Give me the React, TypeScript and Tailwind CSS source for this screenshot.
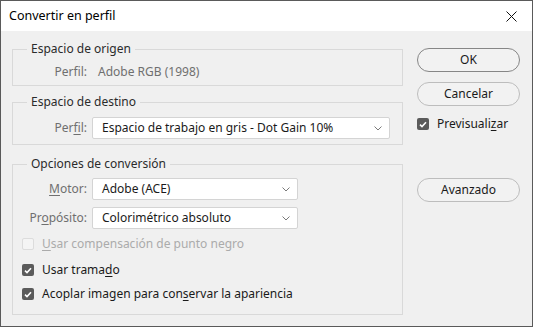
import React from 'react';

const font = {fontFamily: '"Segoe UI", "Noto Sans", "Open Sans", sans-serif'};

function U(props: {children: React.ReactNode}) {
  return <span className="underline underline-offset-2">{props.children}</span>;
}

function Chevron() {
  return (
    <svg width="8" height="5" viewBox="0 0 8 5" className="text-[#7a7a7a]">
      <path d="M0.5 0.5 L4 4 L7.5 0.5" fill="none" stroke="currentColor" strokeWidth="1" />
    </svg>
  );
}

function Select(props: {value: string; width: string}) {
  return (
    <div
      className={`flex h-[22px] items-center justify-between rounded-[2px] border border-[#d4d4d4] bg-white pl-[9px] pr-[7px] text-[#1a1a1a] ${props.width}`}
    >
      <span>{props.value}</span>
      <Chevron />
    </div>
  );
}

function Check(props: {checked?: boolean; disabled?: boolean}) {
  if (props.disabled) {
    return <div className="h-[12px] w-[12px] rounded-[2px] border border-[#dcdcdc] bg-[#f4f4f4]" />;
  }
  return (
    <div className="flex h-[12px] w-[12px] items-center justify-center rounded-[2px] bg-[#5b5b5b]">
      {props.checked && (
        <svg width="8" height="7" viewBox="0 0 8 7">
          <path d="M1 3.6 L3 5.5 L7 1.2" fill="none" stroke="white" strokeWidth="1.6" />
        </svg>
      )}
    </div>
  );
}

function Group(props: {title: string; className?: string; children: React.ReactNode}) {
  return (
    <fieldset className={`border border-[#d9d9d9] ${props.className ?? ''}`}>
      <legend className="ml-[14px] px-[4px] leading-[16px] text-[#2b2b2b]">{props.title}</legend>
      {props.children}
    </fieldset>
  );
}

function Label(props: {children: React.ReactNode}) {
  return <div className="w-[79px] pr-[5px] text-right text-[#6f6f6f]">{props.children}</div>;
}

function Button(props: {label: string; primary?: boolean; className?: string}) {
  return (
    <div
      className={`flex h-[24px] w-[103px] items-center justify-center rounded-full bg-[#f2f2f2] text-[#1a1a1a] ${
        props.primary ? 'border-[1.5px] border-[#868686]' : 'border border-[#bdbdbd]'
      } ${props.className ?? ''}`}
    >
      {props.label}
    </div>
  );
}

export default function App() {
  return (
    <div
      className="flex h-[327px] w-[533px] flex-col border border-[#5a5a5a] bg-[#f0f0f0] text-[12px] leading-[16px]"
      style={font}
    >
      <div className="flex h-[30px] shrink-0 items-center justify-between bg-white pl-[8px] pr-[15px] text-black">
        <span className="text-[12.5px]">Convertir en perfil</span>
        <svg width="11" height="11" viewBox="0 0 11 11">
          <path d="M0.5 0.5 L10.5 10.5 M10.5 0.5 L0.5 10.5" stroke="#111" strokeWidth="1" />
        </svg>
      </div>

      <div className="flex pl-[11px] pt-[10px]">
        <div className="flex w-[391px] flex-col">
          <Group title="Espacio de origen" className="pb-[5px]">
            <div className="flex pt-[7px] text-[#6f6f6f]">
              <Label>Perfil:</Label>
              <span className="pl-[6px]">Adobe RGB (1998)</span>
            </div>
          </Group>

          <Group title="Espacio de destino" className="mt-[8px] pb-[5px]">
            <div className="flex items-center pt-[7px]">
              <Label>
                Per<U>f</U>il:
              </Label>
              <Select value="Espacio de trabajo en gris - Dot Gain 10%" width="w-[298px]" />
            </div>
          </Group>

          <Group title="Opciones de conversión" className="mt-[11px] pb-[12px]">
            <div className="flex items-center pt-[6px]">
              <Label>
                <U>M</U>otor:
              </Label>
              <Select value="Adobe (ACE)" width="w-[206px]" />
            </div>
            <div className="mt-[7px] flex items-center">
              <Label>
                Pr<U>o</U>pósito:
              </Label>
              <Select value="Colorimétrico absoluto" width="w-[206px]" />
            </div>
            <div className="mt-[7px] flex items-center gap-[8px] pl-[9px] text-[#ababab]">
              <Check disabled />
              <span>
                <U>U</U>sar compensación de punto negro
              </span>
            </div>
            <div className="mt-[10px] flex items-center gap-[8px] pl-[9px] text-[#1a1a1a]">
              <Check checked />
              <span>
                Usar trama<U>d</U>o
              </span>
            </div>
            <div className="mt-[8px] flex items-center gap-[8px] pl-[9px] text-[#1a1a1a]">
              <Check checked />
              <span>
                Acoplar imagen para con<U>s</U>ervar la apariencia
              </span>
            </div>
          </Group>
        </div>

        <div className="ml-[14px] flex flex-col pt-[7px]">
          <Button label="OK" primary />
          <Button label="Cancelar" className="mt-[10px]" />
          <div className="mt-[10px] flex items-center gap-[8px] text-[#1a1a1a]">
            <Check checked />
            <span>
              Previsuali<U>z</U>ar
            </span>
          </div>
          <Button label="Avanzado" className="mt-[46px]" />
        </div>
      </div>
    </div>
  );
}
